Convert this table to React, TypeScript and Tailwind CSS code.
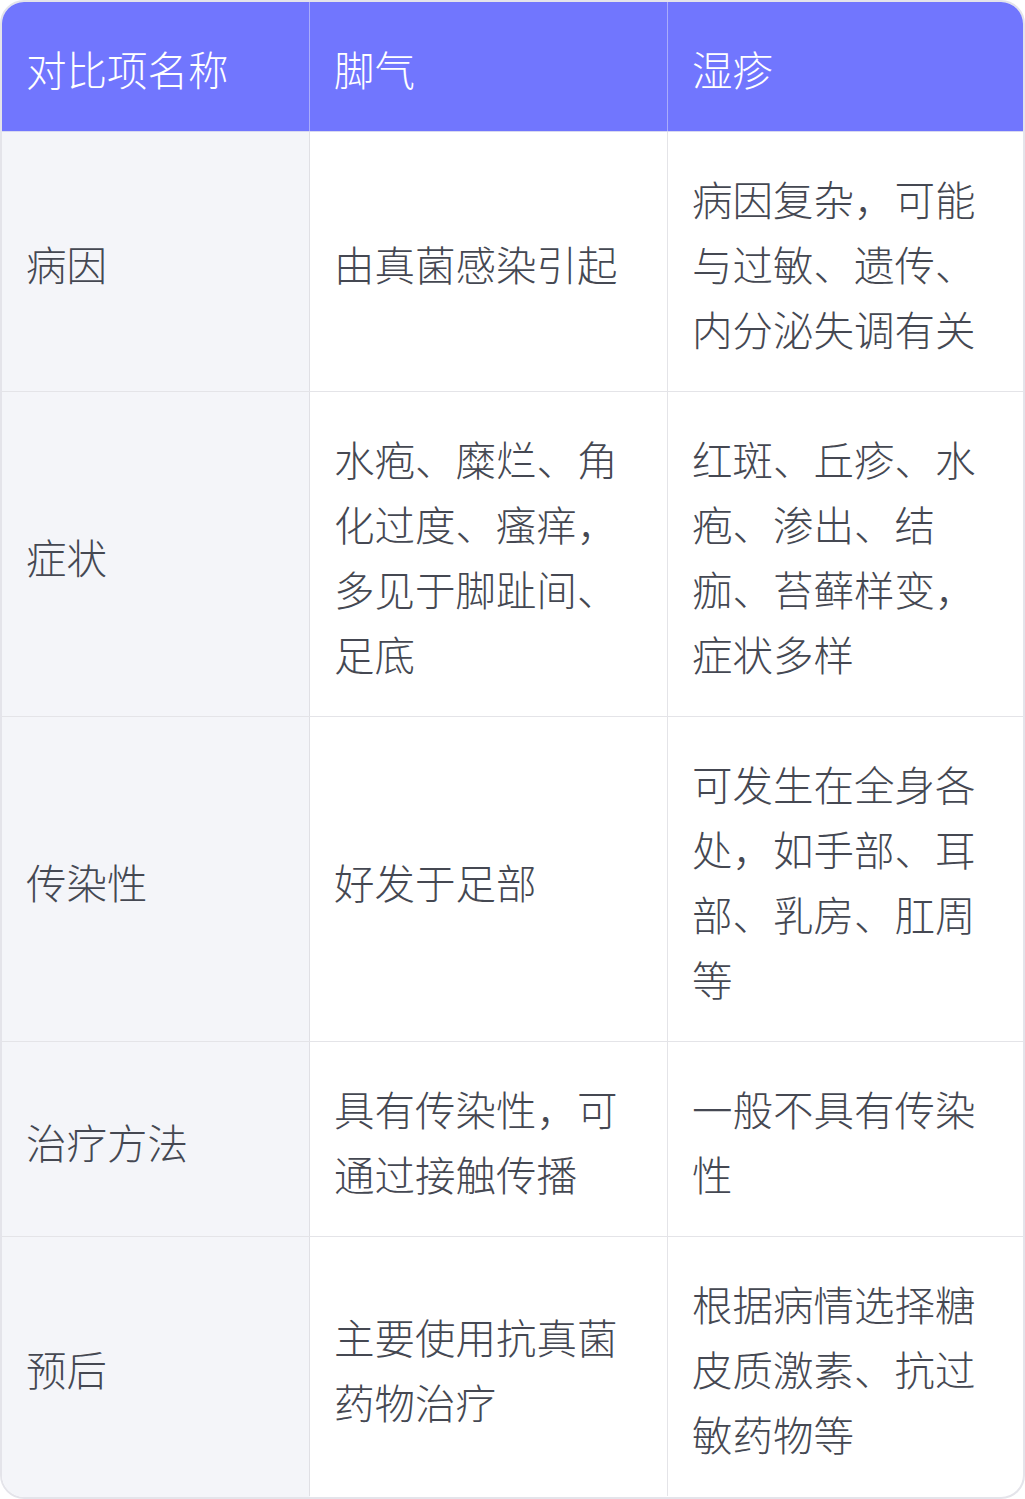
import React from "react";

const rows: [string, string, string][] = [
  ["病因", "由真菌感染引起", "病因复杂，可能与过敏、遗传、内分泌失调有关"],
  ["症状", "水疱、糜烂、角化过度、瘙痒，多见于脚趾间、足底", "红斑、丘疹、水疱、渗出、结痂、苔藓样变，症状多样"],
  ["传染性", "好发于足部", "可发生在全身各处，如手部、耳部、乳房、肛周等"],
  ["治疗方法", "具有传染性，可通过接触传播", "一般不具有传染性"],
  ["预后", "主要使用抗真菌药物治疗", "根据病情选择糖皮质激素、抗过敏药物等"],
];

export default function App() {
  return (
    <div
      className="w-[1025px] border-2 border-[#e4e4ea] rounded-[24px] overflow-hidden bg-white text-[40.5px] leading-[65px] font-light"
      style={{ fontFamily: '"Noto Sans CJK SC", "Noto Sans", sans-serif' }}
    >
      <div className="grid grid-cols-[308px_358px_355px] bg-[#7176fe] text-white border-b border-[#d8d9f0]">
        <div className="px-[24px] pt-[34px] pb-[30px] border-r border-[#a9acfb]">对比项名称</div>
        <div className="px-[24px] pt-[34px] pb-[30px] border-r border-[#a9acfb]">脚气</div>
        <div className="px-[24px] pt-[34px] pb-[30px]">湿疹</div>
      </div>
      {rows.map((r, i) => (
        <div
          key={i}
          className={
            "grid grid-cols-[308px_358px_355px] text-[#454852] " +
            (i < rows.length - 1 ? "border-b border-[#e4e4e8]" : "")
          }
        >
          <div className="px-[24px] pt-[34px] pb-[30px] border-r border-[#e0e0e5] bg-[#f4f5f9] flex items-center">
            <span>{r[0]}</span>
          </div>
          <div className="px-[24px] pt-[34px] pb-[30px] border-r border-[#e4e4e8] flex items-center">
            <span>{r[1]}</span>
          </div>
          <div className="px-[24px] pt-[34px] pb-[30px] flex items-center">
            <span>{r[2]}</span>
          </div>
        </div>
      ))}
      <div className="h-[1px] bg-[#f4f5f9] w-[308px]" />
    </div>
  );
}
